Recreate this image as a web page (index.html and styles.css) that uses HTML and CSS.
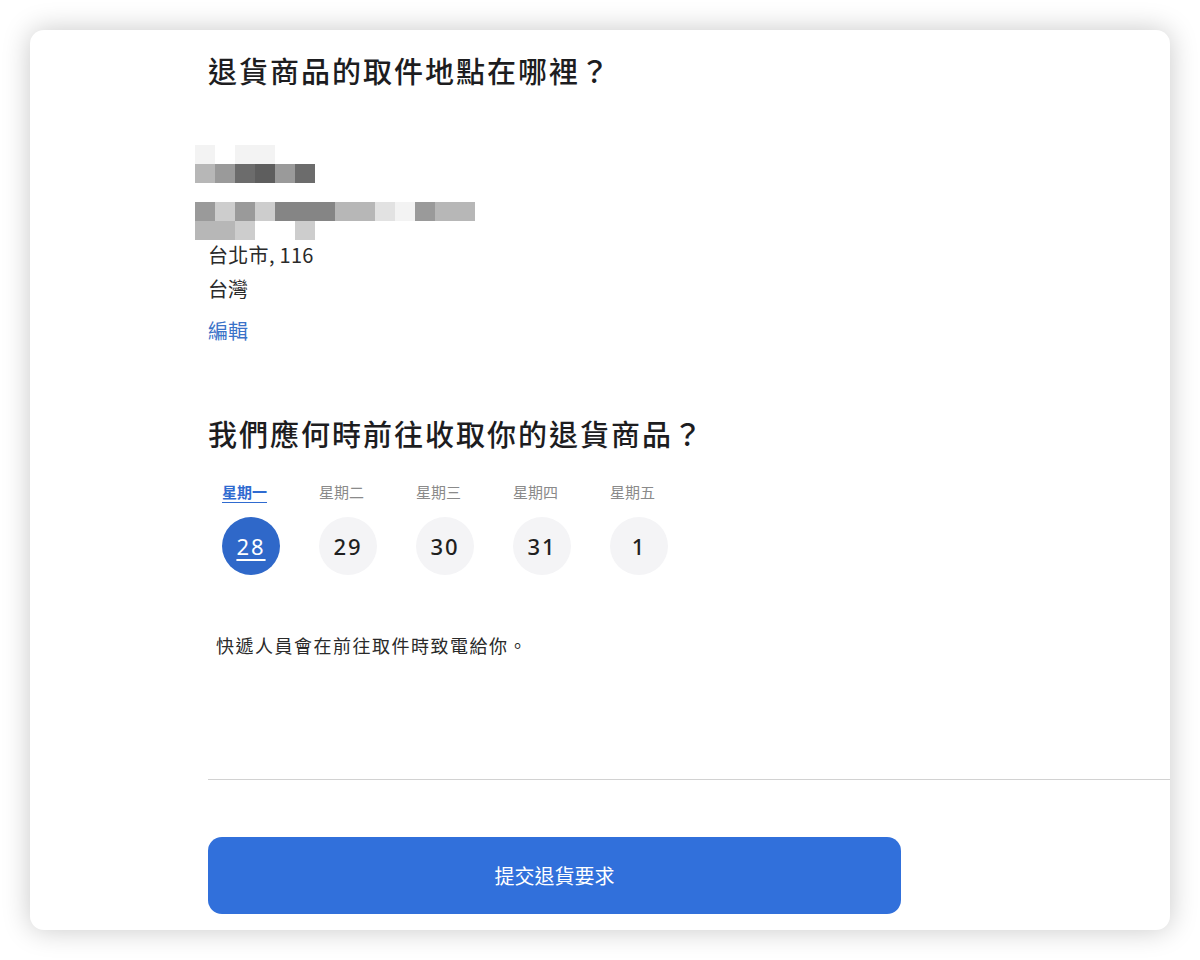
FILE: index.html
```html
<!DOCTYPE html>
<html lang="zh-Hant">
<head>
    <meta charset="UTF-8">
    <meta name="viewport" content="width=device-width, initial-scale=1.0">
    <title>退貨取件</title>
    <link rel="stylesheet" href="styles.css">
</head>
<body>
    <div id="card">
        <h2 class="title">退貨商品的取件地點在哪裡？</h2>

        <div class="mosaic">
            <div class="mrow">
                <span class="px s1"></span><span class="px s0"></span><span class="px s1"></span><span class="px s1"></span>
            </div>
            <div class="mrow">
                <span class="px s4"></span><span class="px s6"></span><span class="px s8"></span><span class="px s9"></span><span class="px s6"></span><span class="px s8"></span>
            </div>
            <div class="mrow"></div>
            <div class="mrow">
                <span class="px s6"></span><span class="px s3"></span><span class="px s6"></span><span class="px s3"></span><span class="px s7"></span><span class="px s7"></span><span class="px s7"></span><span class="px s4"></span><span class="px s4"></span><span class="px s2"></span><span class="px s1"></span><span class="px s6"></span><span class="px s4"></span><span class="px s4"></span>
            </div>
            <div class="mrow">
                <span class="px s4"></span><span class="px s4"></span><span class="px s3"></span><span class="px s0"></span><span class="px s0"></span><span class="px s3"></span>
            </div>
        </div>

        <div class="address">
            <div>台北市, 116</div>
            <div>台灣</div>
        </div>
        <a class="edit" href="#">編輯</a>

        <h2 class="title second">我們應何時前往收取你的退貨商品？</h2>

        <div class="days">
            <div class="day selected">
                <div class="weekday">星期一</div>
                <div class="date">28</div>
            </div>
            <div class="day">
                <div class="weekday">星期二</div>
                <div class="date">29</div>
            </div>
            <div class="day">
                <div class="weekday">星期三</div>
                <div class="date">30</div>
            </div>
            <div class="day">
                <div class="weekday">星期四</div>
                <div class="date">31</div>
            </div>
            <div class="day">
                <div class="weekday">星期五</div>
                <div class="date">1</div>
            </div>
        </div>

        <p class="note">快遞人員會在前往取件時致電給你。</p>

        <hr class="divider">

        <button class="submit">提交退貨要求</button>
    </div>
</body>
</html>
```

FILE: styles.css
```css
body {
    font-family: "Noto Sans CJK TC", "Noto Sans", sans-serif;
    background-color: #ffffff;
    margin: 0;
    padding: 30px;
}

#card {
    background-color: #fff;
    height: 880px;
    border-radius: 14px;
    box-shadow: 0 0 28px rgba(0, 0, 0, 0.22);
    padding: 20px 0 0 178px;
    overflow: hidden;
}

.title {
    margin: 0;
    font-size: 29px;
    line-height: 40px;
    font-weight: 500;
    letter-spacing: 2px;
    color: #1d1d1f;
}

.title.second {
    margin-top: 65px;
}

.mosaic {
    margin: 55px 0 0 -13px;
}

.mrow {
    display: flex;
    height: 19px;
}

.px {
    width: 20px;
    height: 19px;
}

.s0 { background-color: #ffffff; }
.s1 { background-color: #f3f3f3; }
.s2 { background-color: #e2e2e2; }
.s3 { background-color: #cdcdcd; }
.s4 { background-color: #b7b7b7; }
.s6 { background-color: #9a9a9a; }
.s7 { background-color: #858585; }
.s8 { background-color: #6c6c6c; }
.s9 { background-color: #5e5e5e; }

.address {
    margin-top: -2px;
    font-size: 20px;
    line-height: 34px;
    color: #2a2a2a;
}

.address div:first-child {
    letter-spacing: 0.3px;
}

.edit {
    display: inline-block;
    margin-top: 8px;
    font-size: 20px;
    line-height: 34px;
    color: #3a72c8;
    text-decoration: none;
}

.days {
    display: flex;
    gap: 39px;
    margin: 29px 0 0 14px;
}

.day {
    width: 58px;
    display: flex;
    flex-direction: column;
    align-items: flex-start;
}

.weekday {
    font-size: 15px;
    line-height: 20px;
    color: #8a8a8a;
}

.date {
    margin-top: 15px;
    width: 58px;
    height: 58px;
    border-radius: 50%;
    background-color: #f4f4f6;
    display: flex;
    align-items: center;
    justify-content: center;
    font-family: "Noto Sans", sans-serif;
    font-size: 22px;
    font-weight: 500;
    color: #1f1f1f;
    letter-spacing: 2px;
}

.day.selected .weekday {
    color: #2f6bd0;
    font-weight: 700;
    text-decoration: underline;
    text-underline-offset: 4px;
}

.day.selected .date {
    background-color: #2f68c9;
    color: #fff;
    font-weight: 400;
    text-decoration: underline;
    text-decoration-thickness: 2px;
    text-underline-offset: 4px;
}

.note {
    margin: 56px 0 0 8px;
    font-size: 18px;
    line-height: 28px;
    letter-spacing: 1.5px;
    color: #2a2a2a;
}

.divider {
    margin: 120px 0 0 0;
    border: none;
    border-top: 1px solid #d2d2d2;
}

.submit {
    display: block;
    margin-top: 57px;
    width: 693px;
    height: 77px;
    border: none;
    border-radius: 14px;
    background-color: #3170db;
    color: #fff;
    font-family: "Noto Sans CJK TC", sans-serif;
    font-size: 20px;
    cursor: pointer;
}
```
